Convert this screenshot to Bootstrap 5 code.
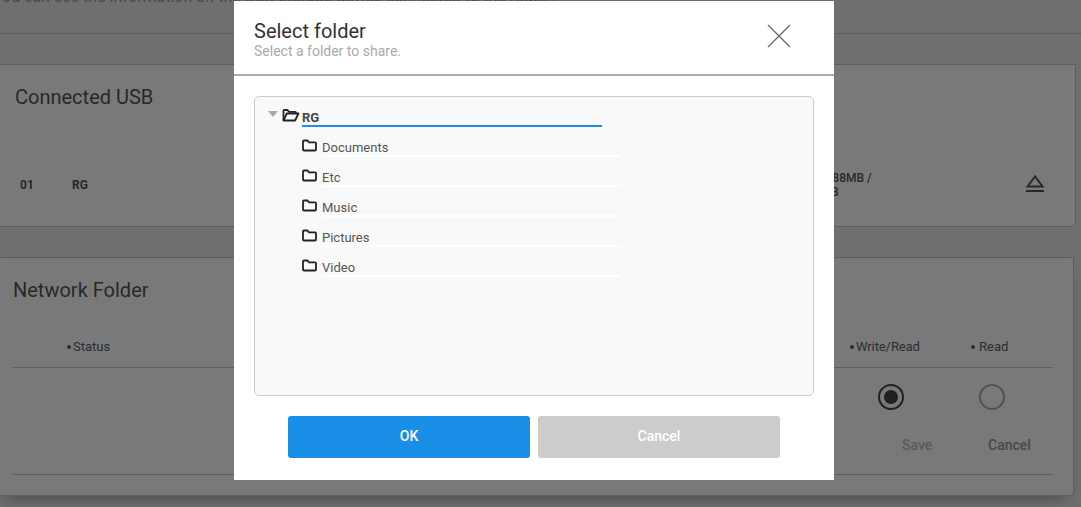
<!DOCTYPE html>
<html lang="en">
<head>
<meta charset="utf-8">
<title>Select folder</title>
<link href="https://cdn.jsdelivr.net/npm/bootstrap@5.3.0/dist/css/bootstrap.min.css" rel="stylesheet">
<style>
html,body{height:507px;overflow:hidden}
body{background:#eae6e6;font-family:Roboto,"Liberation Sans",sans-serif;color:#555}
.pg-intro-wrap{height:34px;overflow:hidden;border-bottom:1px solid #c6c2c2}
.pg-intro-text{margin-top:-14px;margin-left:-7px;font-size:16px;line-height:22px;color:#999;white-space:nowrap}
.pg-usb{margin:30px 5px 0 -4px;height:163px;background:#fffcfc;border:1px solid #c6c2c2;border-radius:0 0 4px 0;padding:19px 0 0 18px}
.pg-title{font-size:20px;line-height:26px;color:#555;font-weight:400;margin:0}
.pg-usbrow{height:26px;margin-top:68px;padding-left:5px;font-size:12px;font-weight:700;color:#555;line-height:14px}
.pg-num{width:52px}
.pg-used{left:816px;top:171px;font-size:12px;line-height:14px;font-weight:500;color:#555}
.pg-eject{right:36px;top:174px}
.pg-net{margin:30px 7px 0 -4px;height:239px;background:#fffcfc;border:1px solid #c6c2c2;border-radius:0 0 4px 0;padding:19px 20px 0 16px;box-shadow:0 10px 16px -8px rgba(0,0,0,.35)}
.pg-heads{height:48px;margin-top:17px;border-bottom:1px solid #c6c2c2;font-size:13px;color:#556070;padding-top:19px;line-height:16px}
.pg-status{margin-left:54px}
.pg-dot::before{content:"";display:inline-block;width:4px;height:4px;border-radius:50%;background:#556070;margin-right:2px;vertical-align:2px}
.pg-wr{left:850px;top:339px;font-size:13px;line-height:16px;color:#556070;letter-spacing:-.1px}
.pg-rd{left:971px;top:339px;font-size:13px;line-height:16px;color:#556070}
.pg-rd::before{margin-right:4px}
.pg-body{height:107px;border-bottom:1px solid #c6c2c2}
.pg-radio{width:26px;height:26px;border-radius:50%;border:2px solid #aaa}
.pg-radio-on{left:878px;top:384px;border-color:#444;display:flex;align-items:center;justify-content:center}
.pg-radio-on::after{content:"";width:14px;height:14px;border-radius:50%;background:#444}
.pg-radio-off{left:979px;top:384px}
.pg-save{left:902px;top:436px;font-size:14px;line-height:18px;font-weight:500;color:#bbb}
.pg-cancel{left:988px;top:436px;font-size:14px;line-height:18px;font-weight:500;color:#999}
.dim{background:rgba(0,0,0,.52);z-index:10}
.dlg{position:absolute;left:234px;top:1px;width:600px;height:479px;background:#fff}
.dlg-head{height:75px;border-bottom:2px solid #aaa;padding:19px 20px 0;position:relative}
.dlg-title{font-size:20px;line-height:22px;color:#333;font-weight:400;margin:0}
.dlg-sub{font-size:14px;line-height:18px;color:#aaa}
.dlg-x{position:absolute;left:533px;top:23px;width:24px;height:24px;background:none;border:0;padding:0;line-height:0}
.dlg-body{padding:20px 20px 0}
.tree{height:300px;background:#f9f9f9;border:1px solid #ccc;border-radius:5px;padding:11px 0 0 13px}
.tree-root{height:19px}
.tree-arrow{width:0;height:0;border-left:5px solid transparent;border-right:5px solid transparent;border-top:6px solid #aaa;margin-top:3px;margin-right:4px}
.tree-rootlabel{width:300px;height:19px;border-bottom:2px solid #1a8fe8;font-size:13px;font-weight:700;color:#444;line-height:19px;margin-left:2px}
.tree-list{list-style:none;margin:0;padding:0 0 0 34px}
.tree-item{height:30px;display:flex;align-items:flex-start;padding-top:12px}
.tree-item svg{flex:none}
.tree-text{margin-left:5px;width:299px;height:18px;border-bottom:2px solid #fff;font-size:13px;line-height:17px;color:#555}
.dlg-foot{padding-top:20px;gap:8px}
.dlg-btn{width:242px;height:42px;border:0;border-radius:3px;font-size:14px;font-weight:500;color:#fff;padding:0 0 2px}
.dlg-ok,.dlg-ok:hover{background:#1a8fe8;color:#fff}
.dlg-no,.dlg-no:hover{background:#ccc;color:#fff}
</style>
</head>
<body>
<div class="pg-intro-wrap"><div class="pg-intro-text">You can see the information on the USB storage device connected to the router.</div></div>
<section class="pg-usb">
  <h2 class="pg-title">Connected USB</h2>
  <div class="pg-usbrow d-flex"><span class="pg-num">01</span><span>RG</span></div>
</section>
<div class="pg-used position-absolute">3,388MB /<br>3GB</div>
<svg class="pg-eject position-absolute" width="20" height="20" viewBox="0 0 20 20" fill="none" stroke="#555" stroke-width="2"><path d="M10 2.500 2.500 12.500h15z"/><path d="M1 17h18"/></svg>
<section class="pg-net">
  <h2 class="pg-title">Network Folder</h2>
  <div class="pg-heads"><span class="pg-status pg-dot">Status</span></div>
  <div class="pg-body"></div>
</section>
<div class="pg-wr pg-dot position-absolute">Write/Read</div>
<div class="pg-rd pg-dot position-absolute">Read</div>
<div class="pg-radio pg-radio-on position-absolute"></div>
<div class="pg-radio pg-radio-off position-absolute"></div>
<div class="pg-save position-absolute">Save</div>
<div class="pg-cancel position-absolute">Cancel</div>

<div class="dim position-fixed top-0 start-0 w-100 h-100">
  <div class="dlg" role="dialog">
    <div class="dlg-head">
      <h5 class="dlg-title">Select folder</h5>
      <div class="dlg-sub">Select a folder to share.</div>
      <button class="dlg-x" type="button" aria-label="Close"><svg width="24" height="24" viewBox="0 0 24 24" stroke="#666" stroke-width="1.3"><path d="M1 1 23 23M23 1 1 23"/></svg></button>
    </div>
    <div class="dlg-body">
      <div class="tree">
        <div class="tree-root d-flex">
          <span class="tree-arrow"></span>
          <svg width="18" height="14" viewBox="0 0 18 14" fill="none" stroke="#222" stroke-width="1.800" stroke-linejoin="round"><path d="M1.500 12.500V3Q1.500 2 2.500 2h3L7 3.800h6Q14 3.800 14 5"/><path d="M1.500 12.500h11.500L16.500 5.500H4.800z"/></svg>
          <span class="tree-rootlabel">RG</span>
        </div>
        <ul class="tree-list">
          <li class="tree-item"><svg width="15" height="13" viewBox="0 0 15 13" fill="none" stroke="#222" stroke-width="1.800" stroke-linejoin="round"><path d="M1 10.500V2.500Q1 1.500 2 1.500h3.500L7 3.300h6Q14 3.300 14 4.300v6.200Q14 11.500 13 11.500H2Q1 11.500 1 10.500z"/></svg><span class="tree-text">Documents</span></li>
          <li class="tree-item"><svg width="15" height="13" viewBox="0 0 15 13" fill="none" stroke="#222" stroke-width="1.800" stroke-linejoin="round"><path d="M1 10.500V2.500Q1 1.500 2 1.500h3.500L7 3.300h6Q14 3.300 14 4.300v6.200Q14 11.500 13 11.500H2Q1 11.500 1 10.500z"/></svg><span class="tree-text">Etc</span></li>
          <li class="tree-item"><svg width="15" height="13" viewBox="0 0 15 13" fill="none" stroke="#222" stroke-width="1.800" stroke-linejoin="round"><path d="M1 10.500V2.500Q1 1.500 2 1.500h3.500L7 3.300h6Q14 3.300 14 4.300v6.200Q14 11.500 13 11.500H2Q1 11.500 1 10.500z"/></svg><span class="tree-text">Music</span></li>
          <li class="tree-item"><svg width="15" height="13" viewBox="0 0 15 13" fill="none" stroke="#222" stroke-width="1.800" stroke-linejoin="round"><path d="M1 10.500V2.500Q1 1.500 2 1.500h3.500L7 3.300h6Q14 3.300 14 4.300v6.200Q14 11.500 13 11.500H2Q1 11.500 1 10.500z"/></svg><span class="tree-text">Pictures</span></li>
          <li class="tree-item"><svg width="15" height="13" viewBox="0 0 15 13" fill="none" stroke="#222" stroke-width="1.800" stroke-linejoin="round"><path d="M1 10.500V2.500Q1 1.500 2 1.500h3.500L7 3.300h6Q14 3.300 14 4.300v6.200Q14 11.500 13 11.500H2Q1 11.500 1 10.500z"/></svg><span class="tree-text">Video</span></li>
        </ul>
      </div>
      <div class="dlg-foot d-flex justify-content-center">
        <button class="btn dlg-btn dlg-ok" type="button">OK</button>
        <button class="btn dlg-btn dlg-no" type="button">Cancel</button>
      </div>
    </div>
  </div>
</div>
<script src="https://cdn.jsdelivr.net/npm/bootstrap@5.3.0/dist/js/bootstrap.bundle.min.js"></script>
</body>
</html>
